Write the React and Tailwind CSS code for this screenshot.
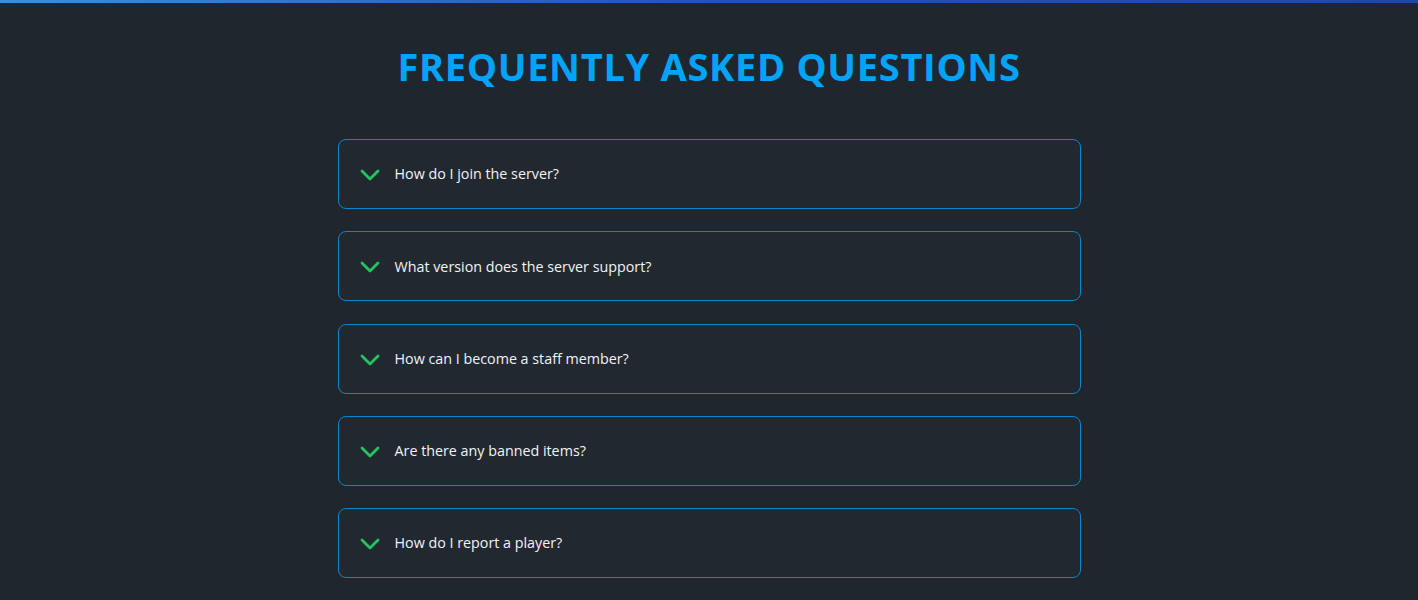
import { useState } from 'react'

const faqs = [
  'How do I join the server?',
  'What version does the server support?',
  'How can I become a staff member?',
  'Are there any banned items?',
  'How do I report a player?',
]

const FaqItem = ({ question }) => {
  const [open, setOpen] = useState(false)
  return (
    <div className="rounded-lg border border-[#0a86cf] bg-[#222830]">
      <button
        type="button"
        onClick={() => setOpen(!open)}
        className="flex h-[68px] w-full items-center gap-[15px] px-[21px] text-left"
      >
        <svg width="20" height="14" viewBox="0 0 20 14" fill="none" className="mt-[2px] shrink-0">
          <path d="M2 3l8 8 8-8" stroke="#22c55e" strokeWidth="2.8" strokeLinecap="round" strokeLinejoin="round" />
        </svg>
        <span className="text-[14.3px] text-[#f1f3f5]">{question}</span>
      </button>
    </div>
  )
}

const App = () => {
  return (
    <div className="min-h-[600px] bg-[#1f262e] font-['Open_Sans',sans-serif]">
      <div className="h-[3px] bg-gradient-to-r from-[#3a8fdc] via-[#1d56b6] to-[#1a4aa6]" />
      <h1 className="pt-[38px] text-center text-[38px] font-bold leading-[50px] tracking-[0.7px] text-[#03a3f7]">
        FREQUENTLY ASKED QUESTIONS
      </h1>
      <div className="mx-auto mt-[48px] flex w-[743px] flex-col gap-[22.25px]">
        {faqs.map((q) => (
          <FaqItem key={q} question={q} />
        ))}
      </div>
    </div>
  )
}

export default App
